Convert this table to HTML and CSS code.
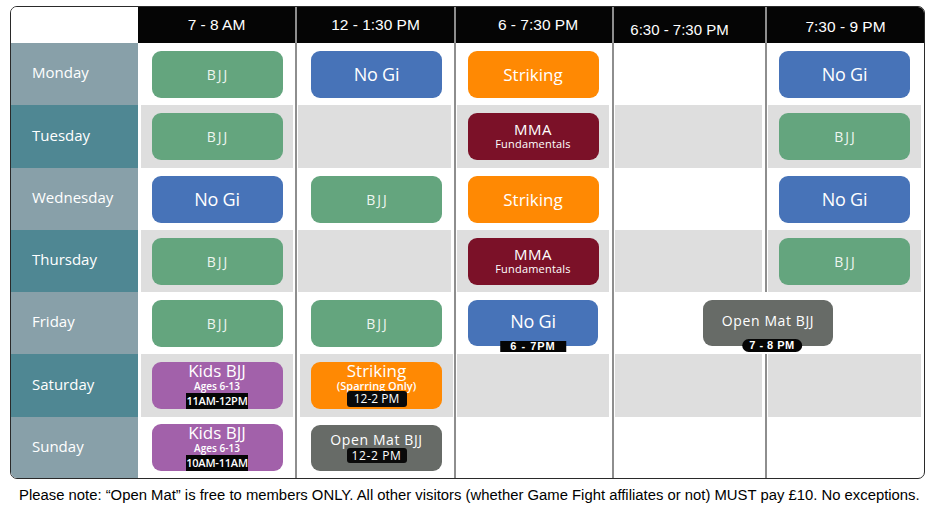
FILE: index.html
```html
<!DOCTYPE html>
<html>
<head>
<meta charset="utf-8">
<link rel="stylesheet" href="styles.css">
</head>
<body>
<div class="schedule">
  <div class="corner"></div>
  <div class="th">7 - 8 AM</div>
  <div class="th ln">12 - 1:30 PM</div>
  <div class="th ln th-c3">6 - 7:30 PM</div>
  <div class="th ln th-c4">6:30 - 7:30 PM</div>
  <div class="th ln th-c5">7:30 - 9 PM</div>

  <div class="day day-a">Monday</div>
  <div class="cell"><div class="pill bjj">BJJ</div></div>
  <div class="cell ln c2"><div class="pill nogi">No Gi</div></div>
  <div class="cell ln"><div class="pill striking">Striking</div></div>
  <div class="cell ln"></div>
  <div class="cell ln"><div class="pill nogi">No Gi</div></div>

  <div class="day day-b">Tuesday</div>
  <div class="cell alt"><div class="pill bjj">BJJ</div></div>
  <div class="cell ln alt"></div>
  <div class="cell ln alt"><div class="pill mma"><span class="mma-title">MMA</span><span class="mma-sub">Fundamentals</span></div></div>
  <div class="cell ln alt"></div>
  <div class="cell ln alt"><div class="pill bjj">BJJ</div></div>

  <div class="day day-a">Wednesday</div>
  <div class="cell"><div class="pill nogi">No Gi</div></div>
  <div class="cell ln c2"><div class="pill bjj">BJJ</div></div>
  <div class="cell ln"><div class="pill striking">Striking</div></div>
  <div class="cell ln"></div>
  <div class="cell ln"><div class="pill nogi">No Gi</div></div>

  <div class="day day-b">Thursday</div>
  <div class="cell alt"><div class="pill bjj">BJJ</div></div>
  <div class="cell ln alt"></div>
  <div class="cell ln alt"><div class="pill mma"><span class="mma-title">MMA</span><span class="mma-sub">Fundamentals</span></div></div>
  <div class="cell ln alt"></div>
  <div class="cell ln alt"><div class="pill bjj">BJJ</div></div>

  <div class="day day-a">Friday</div>
  <div class="cell"><div class="pill bjj">BJJ</div></div>
  <div class="cell ln c2"><div class="pill bjj">BJJ</div></div>
  <div class="cell ln"><div class="pill nogi short">No Gi<span class="flag">6 - 7PM</span></div></div>
  <div class="cell ln span2"><div class="pill openmat short">Open Mat BJJ<span class="flag round">7 - 8 PM</span></div></div>

  <div class="day day-b">Saturday</div>
  <div class="cell alt"><div class="pill kids stack"><span class="kids-title">Kids BJJ</span><span class="kids-age">Ages 6-13</span><span class="box">11AM-12PM</span></div></div>
  <div class="cell ln alt c2"><div class="pill striking stack"><span class="spar-title">Striking</span><span class="spar-sub">(Sparring Only)</span><span class="time">12-2 PM</span></div></div>
  <div class="cell ln alt"></div>
  <div class="cell ln alt"></div>
  <div class="cell ln alt"></div>

  <div class="day day-a">Sunday</div>
  <div class="cell"><div class="pill kids stack"><span class="kids-title">Kids BJJ</span><span class="kids-age">Ages 6-13</span><span class="box">10AM-11AM</span></div></div>
  <div class="cell ln c2"><div class="pill openmat om-sun"><span class="om-title">Open Mat BJJ</span><span class="time">12-2 PM</span></div></div>
  <div class="cell ln"></div>
  <div class="cell ln"></div>
  <div class="cell ln"></div>
</div>
<p class="note">Please note: “Open Mat” is free to members ONLY. All other visitors (whether Game Fight affiliates or not) MUST pay £10. No exceptions.</p>
</body>
</html>
```
FILE: styles.css
```css
html, body {
  margin: 0;
  padding: 0;
  background: #ffffff;
}

body {
  font-family: "Open Sans", "Liberation Sans", sans-serif;
}

.schedule {
  margin: 6px 0 0 10px;
  width: 913px;
  border: 1px solid #2a2a2a;
  border-radius: 7px;
  overflow: hidden;
  display: grid;
  grid-template-columns: 127px 157px 159px 158px 153px 159px;
  grid-template-rows: 36px 62px 63px 62px 62px 62px 63px 61px;
  background: #ffffff;
}

.corner {
  background: #ffffff;
}

.th {
  background: #050505;
  color: #ffffff;
  font-family: "Liberation Sans", Arial, sans-serif;
  font-size: 15.5px;
  display: flex;
  align-items: center;
  justify-content: center;
}

.th.ln {
  border-left: 2px solid #8e8e8e;
}

.th-c3 {
  padding-left: 8px;
}

.th-c4 {
  font-size: 15px;
  padding-right: 20px;
  padding-top: 8px;
}

.th-c5 {
  padding-top: 3px;
}

.day {
  color: #ffffff;
  font-size: 15px;
  display: flex;
  align-items: center;
  padding-left: 21px;
  padding-bottom: 4px;
}

.day-a {
  background: #88a0a9;
}

.day-b {
  background: #4f8793;
}

.cell {
  display: flex;
  align-items: center;
  justify-content: center;
  padding: 0 2px 0 3px;
  background-clip: content-box;
}

.cell.ln {
  border-left: 2px solid #8e8e8e;
  padding-left: 1px;
  padding-right: 3px;
}

.cell.c2 {
  padding-left: 3px;
  padding-right: 1px;
}

.cell.alt {
  background-color: #dedede;
}

.span2 {
  grid-column: span 2;
  padding-right: 14px;
}

.pill {
  position: relative;
  width: 131px;
  height: 47px;
  border-radius: 9px;
  color: #ffffff;
  display: flex;
  flex-direction: column;
  align-items: center;
  justify-content: center;
  text-align: center;
  box-sizing: border-box;
}

.bjj {
  background: #64a57e;
  font-size: 14px;
  letter-spacing: 2px;
  padding-left: 2px;
  color: #eef5f0;
}

.nogi {
  background: #4773b8;
  font-size: 18px;
  font-weight: 500;
  letter-spacing: -0.2px;
}

.striking {
  background: #ff8903;
  font-size: 17px;
}

.mma {
  background: #7b1128;
  line-height: 1;
  padding-bottom: 2px;
}

.mma-title {
  font-size: 15px;
  letter-spacing: 0.5px;
  margin-bottom: 1px;
}

.mma-sub {
  font-size: 11px;
  letter-spacing: 0.2px;
}

.kids {
  background: #a261aa;
}

.openmat {
  background: #676b67;
  font-size: 14px;
  letter-spacing: 0.6px;
}

.short {
  height: 46px;
  width: 130px;
  padding-bottom: 5px;
}

.flag {
  position: absolute;
  left: 50%;
  bottom: -6px;
  transform: translateX(-50%);
  background: #050505;
  color: #ffffff;
  font-family: "Liberation Sans", Arial, sans-serif;
  font-size: 11px;
  font-weight: bold;
  line-height: 11px;
  padding: 0 10px;
  letter-spacing: 1px;
  white-space: nowrap;
}

.flag.round {
  border-radius: 7px;
  line-height: 12px;
  padding: 0 7px 1px;
  letter-spacing: 0.5px;
  bottom: -6px;
  left: calc(50% + 4px);
}

.stack {
  justify-content: flex-start;
}

.kids-title {
  font-size: 17px;
  line-height: 18px;
}

.kids-age {
  font-size: 10px;
  line-height: 12px;
  font-weight: 600;
}

.box {
  margin-top: 1px;
  background: #050505;
  color: #ffffff;
  font-size: 11px;
  font-weight: 600;
  line-height: 16px;
  height: 16px;
  width: 62px;
  letter-spacing: -0.2px;
}

.spar-title {
  font-size: 17px;
  line-height: 18px;
}

.spar-sub {
  font-size: 11px;
  line-height: 11px;
  font-weight: 600;
}

.time {
  background: #0a0a0a;
  color: #ffffff;
  font-size: 12px;
  line-height: 16px;
  width: 60px;
  border-radius: 3px;
}

.om-sun {
  height: 46px;
  padding-bottom: 1px;
}

.om-title {
  line-height: 16px;
}

.om-sun .time {
  line-height: 15px;
}

.note {
  margin: 8px 0 0 0;
  padding-left: 19px;
  font-family: "Liberation Sans", Arial, sans-serif;
  font-size: 14.85px;
  line-height: 17px;
  color: #000000;
  white-space: nowrap;
}
```
